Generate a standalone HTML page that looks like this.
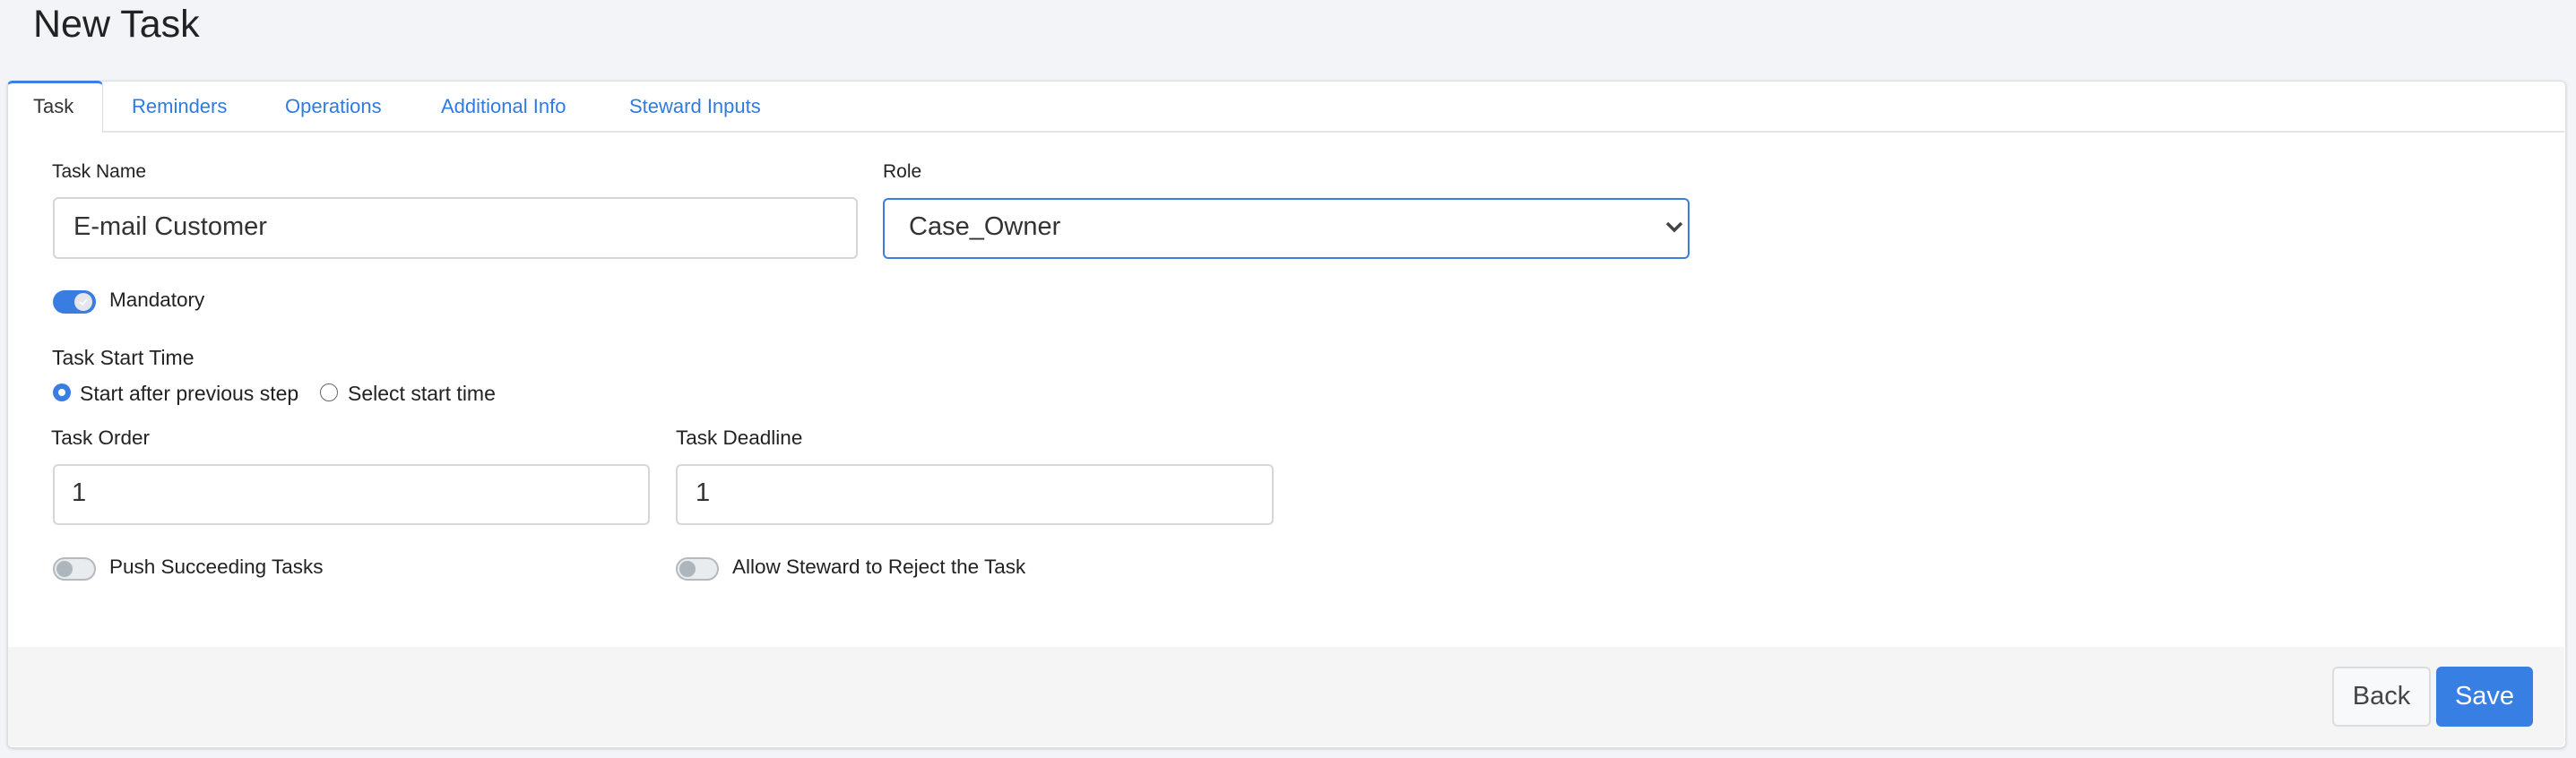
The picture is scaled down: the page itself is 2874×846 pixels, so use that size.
<!DOCTYPE html>
<html><head><meta charset="utf-8"><style>
body{margin:0;width:2874px;height:846px;background:#f3f4f8;font-family:"Liberation Sans",Arial,sans-serif;position:relative;overflow:hidden}
.a{position:absolute;white-space:nowrap}
.title{left:37px;top:3px;font-size:43px;color:#222}
.card{left:8px;top:90px;width:2853px;height:743px;background:#fff;border:1px solid #dcdde2;border-radius:6px;box-shadow:0 1px 3px rgba(0,0,0,.15);overflow:hidden}
.tabline{left:9px;top:146px;width:2852px;height:2px;background:#e2e4e8}
.tab{left:8px;top:90px;width:107px;height:58px;background:#fff;border:1px solid #dcdde2;border-bottom:none;border-top:3px solid #3b80e3;border-radius:6px 6px 0 0;box-sizing:border-box}
.t{font-size:22px;top:106px;color:#2f7be0}
.lbl{font-size:22.5px;color:#222}
.inp{background:#fff;border:2px solid #d3d6da;border-radius:6px;box-sizing:border-box}
.val{font-size:29px;color:#333}
.foot{left:9px;top:722px;width:2852px;height:111px;background:#f5f5f5;border-radius:0 0 6px 6px}
.btn{top:744px;height:67px;border-radius:6px;box-sizing:border-box;font-size:29px;text-align:center;line-height:63px}
.off{width:48px;height:26px;border:2px solid #b5b9be;background:#e9ecef;border-radius:14px;box-sizing:border-box}
.off:after{content:"";position:absolute;left:2px;top:2px;width:18px;height:18px;border-radius:50%;background:#adb5bd}
</style></head><body>
<div class="a title">New Task</div>
<div class="a card"></div>
<div class="a tabline"></div>
<div class="a tab"></div>
<div class="a t" style="left:37px;color:#333">Task</div>
<div class="a t" style="left:147px">Reminders</div>
<div class="a t" style="left:318px">Operations</div>
<div class="a t" style="left:492px">Additional Info</div>
<div class="a t" style="left:702px">Steward Inputs</div>

<div class="a lbl" style="left:58px;top:180px;font-size:21px">Task Name</div>
<div class="a inp" style="left:59px;top:220px;width:898px;height:69px"></div>
<div class="a val" style="left:82px;top:237px">E-mail Customer</div>
<div class="a lbl" style="left:985px;top:180px;font-size:21px">Role</div>
<div class="a inp" style="left:985px;top:221px;width:900px;height:68px;border-color:#3a7fe0"></div>
<div class="a val" style="left:1014px;top:237px">Case_Owner</div>
<svg class="a" style="left:1857px;top:246px" width="22" height="16"><path d="M3 3 L11 11 L19 3" stroke="#444" stroke-width="3.5" fill="none"/></svg>

<div class="a" style="left:59px;top:324px;width:48px;height:26px;background:#3a7de2;border-radius:14px"></div>
<div class="a" style="left:83px;top:327px;width:20px;height:20px;border-radius:50%;background:#e4e6ea"></div>
<svg class="a" style="left:87px;top:331px" width="12" height="12"><path d="M2 6 L5 9 L10 3" stroke="#fff" stroke-width="1.6" fill="none"/></svg>
<div class="a lbl" style="left:122px;top:322px">Mandatory</div>

<div class="a lbl" style="left:58px;top:386px;font-size:23px">Task Start Time</div>
<div class="a" style="left:59px;top:428px;width:20px;height:20px;border-radius:50%;background:#3a7de2"></div>
<div class="a" style="left:65px;top:434px;width:8px;height:8px;border-radius:50%;background:#fff"></div>
<div class="a lbl" style="left:89px;top:426px;font-size:23px">Start after previous step</div>
<div class="a" style="left:357px;top:428px;width:20px;height:20px;border-radius:50%;border:1.5px solid #666;box-sizing:border-box"></div>
<div class="a lbl" style="left:388px;top:426px;font-size:23px">Select start time</div>

<div class="a lbl" style="left:57px;top:476px">Task Order</div>
<div class="a lbl" style="left:754px;top:476px">Task Deadline</div>
<div class="a inp" style="left:59px;top:518px;width:666px;height:68px"></div>
<div class="a inp" style="left:754px;top:518px;width:667px;height:68px"></div>
<div class="a val" style="left:80px;top:534px">1</div>
<div class="a val" style="left:776px;top:534px">1</div>

<div class="a off" style="left:59px;top:622px"></div>
<div class="a lbl" style="left:122px;top:620px">Push Succeeding Tasks</div>
<div class="a off" style="left:754px;top:622px"></div>
<div class="a lbl" style="left:817px;top:620px">Allow Steward to Reject the Task</div>

<div class="a foot"></div>
<div class="a btn" style="left:2602px;width:110px;background:#f8f9fa;border:2px solid #dcdcdc;color:#444">Back</div>
<div class="a btn" style="left:2718px;width:108px;background:#377fe3;color:#fff;line-height:67px">Save</div>
</body></html>
